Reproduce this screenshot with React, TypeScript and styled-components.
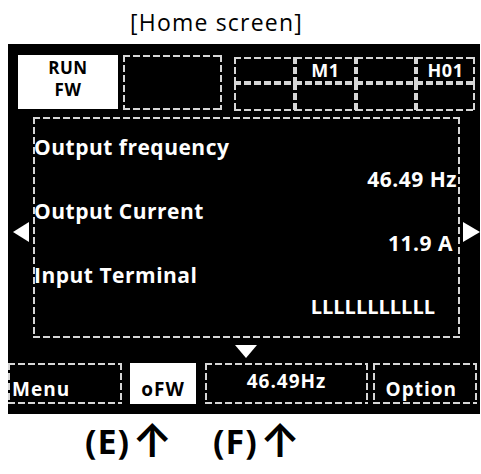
import React from 'react';
import styled, { createGlobalStyle, css } from 'styled-components';

const GlobalStyle = createGlobalStyle`
  body {
    margin: 0;
    background: #fff;
    font-family: 'Open Sans', 'DejaVu Sans', sans-serif;
  }
`;

// hand-made dashed outline: longer dashes than the browser's own dashed border
const dashed = css`
  background-image:
    linear-gradient(to right, #d6d6d6 70%, transparent 0),
    linear-gradient(to right, #d6d6d6 70%, transparent 0),
    linear-gradient(to bottom, #d6d6d6 70%, transparent 0),
    linear-gradient(to bottom, #d6d6d6 70%, transparent 0);
  background-size: 10px 2px, 10px 2px, 2px 10px, 2px 10px;
  background-position: left top, left bottom, left top, right top;
  background-repeat: repeat-x, repeat-x, repeat-y, repeat-y;
`;

const Page = styled.div`
  width: 481px;
  height: 474px;
  background: #fff;
`;

const Title = styled.div`
  box-sizing: border-box;
  height: 44px;
  padding-left: 130px;
  line-height: 44px;
  letter-spacing: 1.2px;
  color: #000;
  font-size: 23px;
  font-weight: normal;
`;

const Screen = styled.div`
  box-sizing: border-box;
  display: flex;
  flex-direction: column;
  margin-left: 8px;
  background: #000;
  width: 472px;
  height: 370px;
  color: #fff;
  font-weight: bold;
`;

const TopRow = styled.div`
  display: flex;
  align-items: flex-start;
  padding: 11px 0 0 10px;
  height: 56px;
`;

const StatusBox = styled.div`
  box-sizing: border-box;
  background: #fff;
  padding-top: 2px;
  width: 100px;
  height: 54px;
  text-align: center;
  line-height: 21.5px;
  letter-spacing: 0.5px;
  color: #000;
  font-size: 17px;
`;

const BlankBox = styled.div`
  ${dashed};
  margin-left: 5px;
  width: 99px;
  height: 55px;
`;

const IndicatorGrid = styled.div`
  display: grid;
  grid-template-columns: 61px 61px 60px 59px;
  grid-template-rows: 26px 28px;
  margin: 2px 0 0 12px;
`;

const Cell = styled.div`
  ${dashed};
  display: flex;
  align-items: center;
  justify-content: center;
  letter-spacing: 0.5px;
  font-size: 18px;
`;

const MainRow = styled.div`
  display: flex;
  margin-top: 6px;
  height: 221px;
`;

const SideArrow = styled.div<{ $dir: 'left' | 'right' }>`
  border-top: 10.5px solid transparent;
  border-bottom: 10.5px solid transparent;
  width: 0;
  height: 0;
  ${(p) =>
    p.$dir === 'left'
      ? css`
          margin: 105px 4px 0 5px;
          border-right: 16px solid #fff;
        `
      : css`
          margin: 105px 0 0 3px;
          border-left: 17px solid #fff;
        `}
`;

const Panel = styled.div`
  ${dashed};
  box-sizing: border-box;
  padding: 14px 0 0 1px;
  width: 427px;
  height: 221px;
  line-height: 32px;
  letter-spacing: 0.5px;
  font-size: 21px;
`;

const Label = styled.div``;

const Value = styled.div<{ $inset: number; $mono?: boolean }>`
  padding-right: ${(p) => p.$inset}px;
  text-align: right;
  letter-spacing: ${(p) => (p.$mono ? '0' : '0.5px')};
  font-size: ${(p) => (p.$mono ? '20px' : 'inherit')};
`;

const DownArrow = styled.div`
  margin: 7px 0 0 227px;
  border-top: 13px solid #fff;
  border-right: 11px solid transparent;
  border-left: 11px solid transparent;
  width: 0;
  height: 0;
`;

const BottomRow = styled.div`
  display: flex;
  margin-top: 5px;
  height: 41px;
`;

const SoftKey = styled.div<{
  $w: number;
  $gap: number;
  $top: number;
  $align: 'left' | 'center' | 'right';
  $pad?: number;
  $active?: boolean;
}>`
  box-sizing: border-box;
  margin-left: ${(p) => p.$gap}px;
  padding: ${(p) => p.$top}px ${(p) => (p.$align === 'right' ? p.$pad ?? 0 : 0)}px 0
    ${(p) => (p.$align === 'left' ? p.$pad ?? 0 : 0)}px;
  width: ${(p) => p.$w}px;
  text-align: ${(p) => p.$align};
  line-height: 18px;
  letter-spacing: 1px;
  font-size: 19px;
  ${(p) =>
    p.$active
      ? css`
          background: #fff;
          color: #000;
        `
      : dashed}
`;

const Captions = styled.div`
  display: flex;
  margin-top: 7px;
  padding-left: 85px;
  line-height: 40px;
  letter-spacing: 1px;
  color: #000;
  font-size: 34px;
  font-weight: bold;
`;

const Caption = styled.span<{ $w?: number }>`
  width: ${(p) => (p.$w ? `${p.$w}px` : 'auto')};
`;

const Arrow = styled.span`
  display: inline-block;
  margin-left: 2px;
  vertical-align: -3px;
  line-height: 30px;
  font-family: Inter, 'DejaVu Sans', sans-serif;
  font-size: 46px;
  font-weight: 600;
`;

export default function App() {
  return (
    <Page>
      <GlobalStyle />
      <Title>[Home screen]</Title>
      <Screen>
        <TopRow>
          <StatusBox>
            RUN
            <br />
            FW
          </StatusBox>
          <BlankBox />
          <IndicatorGrid>
            <Cell />
            <Cell>M1</Cell>
            <Cell />
            <Cell>H01</Cell>
            <Cell />
            <Cell />
            <Cell />
            <Cell />
          </IndicatorGrid>
        </TopRow>
        <MainRow>
          <SideArrow $dir='left' />
          <Panel>
            <Label>Output frequency</Label>
            <Value $inset={3}>46.49 Hz</Value>
            <Label>Output Current</Label>
            <Value $inset={7}>11.9 A</Value>
            <Label>Input Terminal</Label>
            <Value $inset={25} $mono>
              LLLLLLLLLLL
            </Value>
          </Panel>
          <SideArrow $dir='right' />
        </MainRow>
        <DownArrow />
        <BottomRow>
          <SoftKey $w={114} $gap={0} $top={17} $align='left' $pad={4}>
            Menu
          </SoftKey>
          <SoftKey $w={66} $gap={8} $top={17} $align='center' $active>
            oFW
          </SoftKey>
          <SoftKey $w={163} $gap={9} $top={9} $align='center'>
            46.49Hz
          </SoftKey>
          <SoftKey $w={104} $gap={5} $top={17} $align='right' $pad={20}>
            Option
          </SoftKey>
        </BottomRow>
      </Screen>
      <Captions>
        <Caption $w={128}>
          (E)<Arrow>↑</Arrow>
        </Caption>
        <Caption>
          (F)<Arrow>↑</Arrow>
        </Caption>
      </Captions>
    </Page>
  );
}
